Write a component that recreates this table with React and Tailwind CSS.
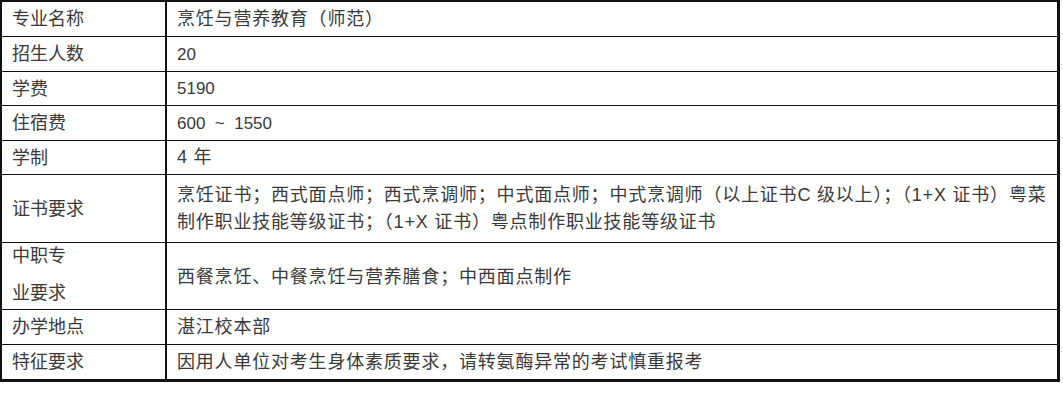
import React from "react";

const rows = [
  { label: ["专业名称"], value: "烹饪与营养教育（师范）", h: "h-[35px]" },
  { label: ["招生人数"], value: "20", h: "h-[35px]", num: true },
  { label: ["学费"], value: "5190", h: "h-[34px]", num: true },
  { label: ["住宿费"], value: "600  ~  1550", h: "h-[35px]", num: true },
  { label: ["学制"], value: "4 年", h: "h-[34px]" },
  {
    label: ["证书要求"],
    value: (
      <>
        烹饪证书；西式面点师；西式烹调师；中式面点师；中式烹调师（以上证书C 级以上）；（1+X 证书）粤菜
        <br />
        制作职业技能等级证书；（1+X 证书）粤点制作职业技能等级证书
      </>
    ),
    h: "h-[68px]",
  },
  {
    label: ["中职专", "业要求"],
    value: "西餐烹饪、中餐烹饪与营养膳食；中西面点制作",
    h: "h-[67px]",
    tall: true,
  },
  { label: ["办学地点"], value: "湛江校本部", h: "h-[35px]" },
  { label: ["特征要求"], value: "因用人单位对考生身体素质要求，请转氨酶异常的考试慎重报考", h: "h-[34px]" },
];

export default function App() {
  return (
    <div
      className="w-[1063px] h-[413px] bg-white text-[#3a3a3a] text-[18px]"
      style={{ fontFamily: '"Liberation Sans", "Noto Sans CJK SC", sans-serif' }}
    >
      <div className="w-[1060px] border-t-2 border-l-2 border-r-[3px] border-b-[3px] border-[#111]">
        {rows.map((r, i) => (
          <div
            key={i}
            className={`grid grid-cols-[163px_1fr] ${r.h} ${i < rows.length - 1 ? "border-b border-[#111]" : ""}`}
          >
            <div
              className={`flex flex-col justify-center gap-[11px] pl-[10px] leading-[26px] ${r.tall ? "pb-[6px]" : ""}`}
            >
              {r.label.map((l) => (
                <span key={l}>{l}</span>
              ))}
            </div>
            <div
              className={`flex items-center pl-[10px] border-l-2 border-[#111] whitespace-pre leading-[27px] ${r.num ? "text-[17px]" : "tracking-[0.8px]"}`}
            >
              <span>{r.value}</span>
            </div>
          </div>
        ))}
      </div>
    </div>
  );
}
